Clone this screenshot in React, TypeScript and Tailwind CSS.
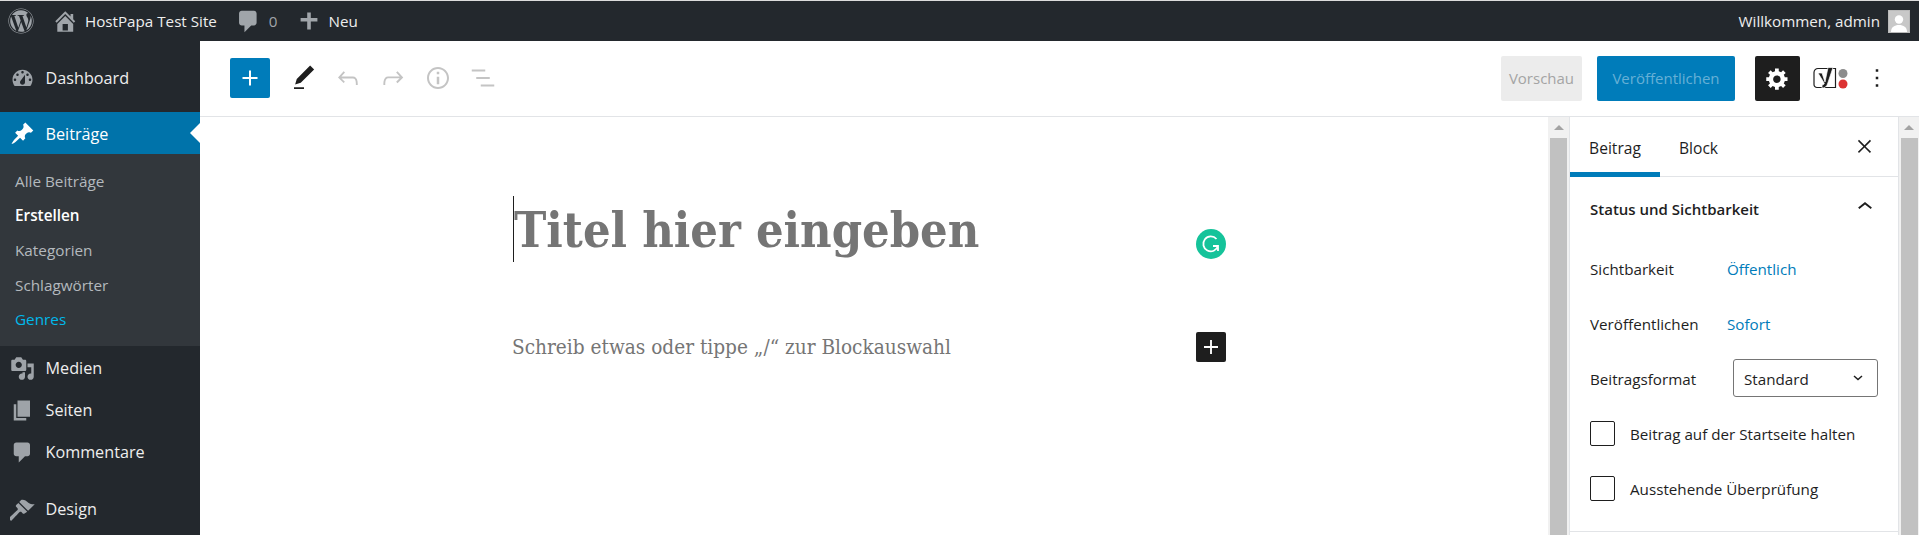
import React from "react";
import { FaWordpress } from "react-icons/fa";

const P = ({ d, vb = 20, className = "" }: { d: string; vb?: number; className?: string }) => (
  <svg viewBox={`0 0 ${vb} ${vb}`} className={className} fill="currentColor" aria-hidden="true">
    <path d={d} />
  </svg>
);

const icons = {
  dash: "M3.76 16h12.48c1.1-1.37 1.76-3.11 1.76-5 0-4.42-3.58-8-8-8s-8 3.58-8 8c0 1.89.66 3.63 1.76 5zM10 4c.55 0 1 .45 1 1s-.45 1-1 1-1-.45-1-1 .45-1 1-1zM6 6c.55 0 1 .45 1 1s-.45 1-1 1-1-.45-1-1 .45-1 1-1zm8 0c.55 0 1 .45 1 1s-.45 1-1 1-1-.45-1-1 .45-1 1-1zm-5.37 5.55L12 7v6c0 1.1-.9 2-2 2s-2-.9-2-2c0-.57.24-1.08.63-1.45zM4 10c.55 0 1 .45 1 1s-.45 1-1 1-1-.45-1-1 .45-1 1-1zm12 0c.55 0 1 .45 1 1s-.45 1-1 1-1-.45-1-1 .45-1 1-1z",
  pin: "M10.44 3.02l1.82-1.82 6.36 6.35-1.83 1.82c-1.05-.68-2.48-.57-3.41.36l-.75.75c-.92.93-1.04 2.35-.35 3.41l-1.83 1.82-2.41-2.41-2.8 2.79c-.42.42-3.38 2.71-3.8 2.29s1.86-3.39 2.28-3.81l2.79-2.79L4.1 9.36l1.83-1.82c1.05.69 2.48.57 3.4-.36l.75-.75c.93-.92 1.05-2.35.36-3.41z",
  comment: "M5 2h9c1.1 0 2 .9 2 2v7c0 1.1-.9 2-2 2h-2l-5 5v-5H5c-1.1 0-2-.9-2-2V4c0-1.1.9-2 2-2z",
  media: "M13 11V4c0-.55-.45-1-1-1h-1.67L9 1H5L3.67 3H2c-.55 0-1 .45-1 1v7c0 .55.45 1 1 1h10c.55 0 1-.45 1-1zM7 4.5c1.38 0 2.5 1.12 2.5 2.5S8.38 9.5 7 9.5 4.5 8.38 4.5 7 5.62 4.5 7 4.5zM14 6h5v10.5c0 1.38-1.12 2.5-2.5 2.5S14 17.88 14 16.5s1.12-2.5 2.5-2.5c.17 0 .34.02.5.05V9h-3V6zm-4 8.05V13h2v3.5c0 1.38-1.12 2.5-2.5 2.5S7 17.88 7 16.5 8.12 14 9.5 14c.17 0 .34.02.5.05z",
  page: "M6 15V2h10v13H6zm-1 1h8v2H3V5h2v11z",
  brush: "M14.48 11.06L7.41 3.99l1.5-1.5c.5-.56 2.3-.47 3.51.32 1.21.8 1.43 1.28 2.91 2.1 1.18.64 2.45 1.26 4.45.85zm-.71.71L6.7 4.7 4.93 6.47c-.39.39-.39 1.02 0 1.41l1.06 1.06c.39.39.39 1.03 0 1.42-.6.6-6.54 6.16-6.54 6.16-.39.39-.39 1.02 0 1.41l.71.71c.39.39 1.02.39 1.41 0 0 0 5.56-5.94 6.16-6.54.39-.39 1.03-.39 1.42 0l1.06 1.06c.39.39 1.02.39 1.41 0z",
  home: "M16 8.5l1.53 1.53-1.06 1.06L10 4.62l-6.47 6.47-1.06-1.06L10 2.5l4 4v-2h2v4zm-6-2.46l6 5.99V18H4v-5.97zM12 17v-5H8v5h4z",
  plus: "M17 7.5v3h-5.5V17h-3v-6.500H3v-3h5.500V3h3v4.500z",
  cog: "M18 12h-2.18c-.17.7-.44 1.35-.81 1.93l1.54 1.54-2.1 2.1-1.54-1.54c-.58.36-1.23.63-1.91.79V19H8v-2.18c-.68-.16-1.33-.43-1.91-.79l-1.54 1.54-2.12-2.12 1.54-1.54c-.36-.58-.63-1.23-.79-1.91H1V9.03h2.17c.16-.7.44-1.35.8-1.94L2.43 5.55l2.1-2.1 1.54 1.54c.58-.37 1.24-.64 1.93-.81V2h3v2.18c.68.16 1.33.43 1.91.79l1.54-1.54 2.12 2.12-1.54 1.54c.36.59.64 1.24.8 1.94H18V12zm-8.5 1.5c1.66 0 3-1.34 3-3s-1.34-3-3-3-3 1.34-3 3 1.34 3 3 3z",
  undo: "M18.3 11.7c-.6-.6-1.4-.9-2.3-.9H6.7l2.9-3.3-1.1-1-4.5 5L8.5 16l1-1-2.7-2.7H16c.5 0 .9.2 1.3.5 1 1 1 3.4 1 4.5v.3h1.5v-.2c0-1.5 0-4.3-1.5-5.7z",
  redo: "M15.6 6.5l-1.1 1 2.9 3.3H8c-.9 0-1.7.3-2.3.9-1.4 1.5-1.4 4.2-1.4 5.6v.2h1.5v-.3c0-1.1 0-3.5 1-4.5.3-.3.7-.5 1.3-.5h9.2L14.5 15l1.1 1.1 4.6-4.6-4.6-5z",
  info: "M12 3.2c-4.8 0-8.8 3.9-8.8 8.8 0 4.8 3.9 8.8 8.8 8.8 4.8 0 8.8-3.9 8.8-8.8 0-4.8-4-8.8-8.8-8.8zm0 16c-4 0-7.2-3.3-7.2-7.2C4.8 8 8 4.8 12 4.8s7.2 3.3 7.2 7.2c0 4-3.2 7.2-7.2 7.2zM11 17h2v-6h-2v6zm0-8h2V7h-2v2z",
  list: "M13.8 5.2H3v1.5h10.8V5.2zm-3.6 12v1.5H21v-1.5H10.2zm7.2-6H6.6v1.5h10.8v-1.5z",
  pen: "M20.1 5.1L16.9 2 6.2 12.7l-1.3 4.4 4.5-1.3L20.1 5.1zM4 20.8h8v-1.5H4v1.5z",
  gplus: "M18 11.2h-5.2V6h-1.6v5.2H6v1.6h5.2V18h1.6v-5.2H18z",
  close: "M13 11.9l5.3-5.3-1.1-1.1-5.2 5.3-5.3-5.3-1 1.1 5.2 5.3-5.2 5.2 1 1.1 5.3-5.3 5.2 5.3 1.1-1.1z",
  up: "M6.5 12.4L12 8l5.5 4.4-.9 1.2L12 10l-4.5 3.6-1-1.2z",
  dots: "M13 19h-2v-2h2v2zm0-6h-2v-2h2v2zm0-6h-2V5h2v2z",
};

const ui = "font-['Open_Sans',sans-serif]";

function MenuItem({ icon, label, className = "", iconClass = "text-[#9ea3a8]", labelClass = "" }: { icon: string; label: string; className?: string; iconClass?: string; labelClass?: string }) {
  return (
    <div className={`flex h-[42px] items-center text-[16.2px] text-[#eeeeee] ${className}`}>
      <span className={`flex w-[45.500px] justify-center ${iconClass}`}>
        <P d={icon} className="h-[25px] w-[25px]" />
      </span>
      <span className={labelClass}>{label}</span>
    </div>
  );
}

function SubItem({ label, className = "text-[#b4b9be]" }: { label: string; className?: string }) {
  return <div className={`flex h-[34.6px] items-center pl-[15px] text-[15.3px] ${className}`}>{label}</div>;
}

function AdminBar() {
  return (
    <header className="flex h-[40px] shrink-0 items-center bg-[#23282d] text-[15.2px] text-[#eeeeee]">
      <FaWordpress className="ml-[8px] h-[26px] w-[26px] text-[#a0a5aa]" />
      <P d={icons.home} className="ml-[18px] h-[26.500px] w-[26.500px] text-[#a0a5aa]" />
      <span className="ml-[6.500px]">HostPapa Test Site</span>
      <P d={icons.comment} className="ml-[18px] h-[27px] w-[27px] text-[#a0a5aa]" />
      <span className="ml-[7px] text-[#a0a5aa]">0</span>
      <P d={icons.plus} className="ml-[19px] h-[24px] w-[24px] text-[#a0a5aa]" />
      <span className="ml-[8px]">Neu</span>
      <span className="ml-auto">Willkommen, admin</span>
      <span className="ml-[8px] mr-[9px] flex h-[23px] w-[22px] items-end justify-center overflow-hidden border border-[#bbbbbb] bg-[#c8c8c8]">
        <svg viewBox="0 0 20 20" className="h-[20px] w-[20px]" fill="#ffffff" aria-hidden="true">
          <circle cx="10" cy="7.500" r="4.200" />
          <path d="M2 20c0-5 3.500-7 8-7s8 2 8 7z" />
        </svg>
      </span>
    </header>
  );
}

function SideNav() {
  return (
    <nav className="w-[200px] shrink-0 bg-[#23282d] pt-[15px]">
      <MenuItem icon={icons.dash} label="Dashboard" className="h-[44px]" />
      <div className="relative mt-[12px] bg-[#0073aa]">
        <MenuItem icon={icons.pin} label="Beiträge" className="text-white" iconClass="text-white" labelClass="pt-[2px]" />
        <span className="absolute right-0 top-[11px] h-0 w-0 border-y-[10px] border-r-[10px] border-y-transparent border-r-white" />
      </div>
      <div className="h-[192px] bg-[#32373c] pt-[10px]">
        <SubItem label="Alle Beiträge" />
        <SubItem label="Erstellen" className="font-semibold text-white" />
        <SubItem label="Kategorien" />
        <SubItem label="Schlagwörter" />
        <SubItem label="Genres" className="text-[#00b9eb]" />
      </div>
      <div className="pt-[1px]">
        <MenuItem icon={icons.media} label="Medien" />
        <MenuItem icon={icons.page} label="Seiten" />
        <MenuItem icon={icons.comment} label="Kommentare" />
        <MenuItem icon={icons.brush} label="Design" className="mt-[15px]" />
      </div>
    </nav>
  );
}

function Toolbar() {
  return (
    <div className={`flex h-[76px] shrink-0 items-center border-b border-[#e2e4e7] pb-[1px] ${ui}`}>
      <button className="ml-[30px] flex h-[40px] w-[40px] items-center justify-center rounded-[2px] bg-[#007cba] text-white">
        <P vb={24} d={icons.gplus} className="h-[30px] w-[30px]" />
      </button>
      <P vb={24} d={icons.pen} className="ml-[19px] h-[30px] w-[30px] text-[#1e1e1e]" />
      <P vb={24} d={icons.undo} className="ml-[14px] h-[30px] w-[30px] text-[#c4c4c4]" />
      <P vb={24} d={icons.redo} className="ml-[15px] h-[30px] w-[30px] text-[#c4c4c4]" />
      <P vb={24} d={icons.info} className="ml-[15px] h-[30px] w-[30px] text-[#c4c4c4]" />
      <P vb={24} d={icons.list} className="ml-[15px] h-[30px] w-[30px] text-[#c4c4c4]" />
      <button className="ml-auto h-[45px] w-[81px] rounded-[2px] bg-[#ececec] text-[15px] text-[#a4a4a4]">Vorschau</button>
      <button className="ml-[15px] h-[45px] w-[138px] rounded-[2px] bg-[#007cba] text-[15px] text-[#66b0d6]">Veröffentlichen</button>
      <button className="ml-[20px] flex h-[45px] w-[45px] items-center justify-center rounded-[2px] bg-[#1e1e1e] text-white">
        <P d={icons.cog} className="h-[25px] w-[25px]" />
      </button>
      <svg viewBox="0 0 35 24" className="ml-[13px] h-[24px] w-[35px]" aria-hidden="true">
        <path d="M5 2.500h17.500v19H4a3 3 0 0 1-3-3V6.500a4 4 0 0 1 4-4z" fill="none" stroke="#1e1e1e" strokeWidth="1.200" />
        <path d="M5 7h4l3 9 3-14.500h5L14.500 18c-.9 2.800-2.700 4-5.500 4v-3c1.300 0 2-.6 2.300-1.700z" fill="#1e1e1e" stroke="#ffffff" strokeWidth=".7" />
        <circle cx="30" cy="7.500" r="4.500" fill="#8c8c8c" />
        <circle cx="30" cy="18" r="4.500" fill="#dc3232" />
      </svg>
      <P vb={24} d={icons.dots} className="ml-[14px] mr-[27px] h-[30px] w-[30px] text-[#1e1e1e]" />
    </div>
  );
}

function Scrollbar({ className = "", thumb = "mx-[2px]" }: { className?: string; thumb?: string }) {
  return (
    <div className={`flex shrink-0 flex-col bg-[#f1f1f1] ${className}`}>
      <div className="flex h-[21px] items-center justify-center">
        <span className="h-0 w-0 border-x-[5px] border-b-[5px] border-x-transparent border-b-[#a3a3a3]" />
      </div>
      <div className={`flex-1 bg-[#c1c1c1] ${thumb}`} />
    </div>
  );
}

function Field({ label, value, className = "h-[56px]" }: { label: string; value: string; className?: string }) {
  return (
    <div className={`flex items-center text-[15.2px] text-[#1e1e1e] ${className}`}>
      <span className="w-[137px]">{label}</span>
      <span className="text-[#007cba]">{value}</span>
    </div>
  );
}

function Check({ label }: { label: string }) {
  return (
    <div className="flex h-[55px] items-center text-[15.2px] text-[#1e1e1e]">
      <span className="h-[25px] w-[25px] rounded-[2px] border border-[#1e1e1e]" />
      <span className="ml-[15px] pt-[2px]">{label}</span>
    </div>
  );
}

function Settings() {
  return (
    <aside className="flex w-[330px] shrink-0 flex-col border-x border-[#e2e4e7] bg-white">
      <div className="flex h-[60px] shrink-0 items-start border-b border-[#e2e4e7] text-[15.600px] text-[#1e1e1e]">
        <div className="flex h-[60px] w-[90px] items-center justify-center border-b-[5px] border-[#007cba] pt-[8px]">Beitrag</div>
        <div className="ml-[19px] flex h-[59px] items-center pt-[5px]">Block</div>
        <P vb={24} d={icons.close} className="ml-auto mr-[21px] mt-[17px] h-[25px] w-[25px]" />
      </div>
      <div className="flex h-[355px] shrink-0 flex-col border-b border-[#e2e4e7] px-[20px]">
        <div className="flex h-[64px] items-center justify-between text-[15px] font-semibold text-[#1e1e1e]">
          <span>Status und Sichtbarkeit</span>
          <P vb={24} d={icons.up} className="-mr-[2px] -mt-[4px] h-[30px] w-[30px]" />
        </div>
        <Field label="Sichtbarkeit" value="Öffentlich" />
        <Field label="Veröffentlichen" value="Sofort" className="h-[54px] mb-[2px]" />
        <div className="flex h-[50px] items-center justify-between text-[15.2px] text-[#1e1e1e]">
          <span className="pt-[2px]">Beitragsformat</span>
          <div className="flex h-[38px] w-[145px] items-center justify-between rounded-[3px] border border-[#757575] pl-[10px] pr-[14px]">
            <span className="pt-[2px]">Standard</span>
            <svg viewBox="0 0 10 6" className="h-[6px] w-[10px]" fill="none" stroke="#1e1e1e" strokeWidth="1.500" aria-hidden="true">
              <path d="M1 1l4 3.500L9 1" />
            </svg>
          </div>
        </div>
        <div className="mt-[3px]">
          <Check label="Beitrag auf der Startseite halten" />
          <Check label="Ausstehende Überprüfung" />
        </div>
      </div>
    </aside>
  );
}

const serif = "font-['DejaVu_Serif_Condensed','DejaVu_Serif',serif]";

function EditorCanvas() {
  return (
    <main className="min-w-0 flex-1 bg-white">
      <div className="ml-[313px] w-[713px] pt-[79px]">
        <div className="flex h-[66px] items-center justify-between border-l border-[#1e1e1e]">
          <h1 className={`${serif} pt-[2px] text-[48.300px] font-bold leading-none text-[#757575]`}>Titel hier eingeben</h1>
          <svg viewBox="0 0 30 30" className="mt-[30px] h-[30px] w-[30px]" aria-hidden="true">
            <circle cx="15" cy="15" r="15" fill="#15c39a" />
            <path d="M20.500 10a7.500 7.500 0 1 0 1.500 7M22 22v-5h-5" fill="none" stroke="#ffffff" strokeWidth="1.800" />
          </svg>
        </div>
        <div className="mt-[70px] flex h-[30px] items-center justify-between">
          <p className={`-ml-[1px] ${serif} text-[20.600px] text-[#757575]`}>Schreib etwas oder tippe „/“ zur Blockauswahl</p>
          <button className="flex h-[30px] w-[30px] items-center justify-center rounded-[2px] bg-[#1e1e1e] text-white">
            <P vb={24} d={icons.gplus} className="h-[28px] w-[28px]" />
          </button>
        </div>
      </div>
    </main>
  );
}

export default function App() {
  return (
    <div className={`flex h-[535px] w-[1919px] flex-col overflow-hidden border-t border-[#dcdcdc] bg-white ${ui}`}>
      <AdminBar />
      <div className="flex min-h-0 flex-1">
        <SideNav />
        <div className="flex min-w-0 flex-1 flex-col">
          <Toolbar />
          <div className="flex min-h-0 flex-1">
            <EditorCanvas />
            <Scrollbar className="w-[21px]" />
            <Settings />
            <Scrollbar className="w-[20px]" thumb="ml-[2px] mr-[1px]" />
          </div>
        </div>
      </div>
    </div>
  );
}
